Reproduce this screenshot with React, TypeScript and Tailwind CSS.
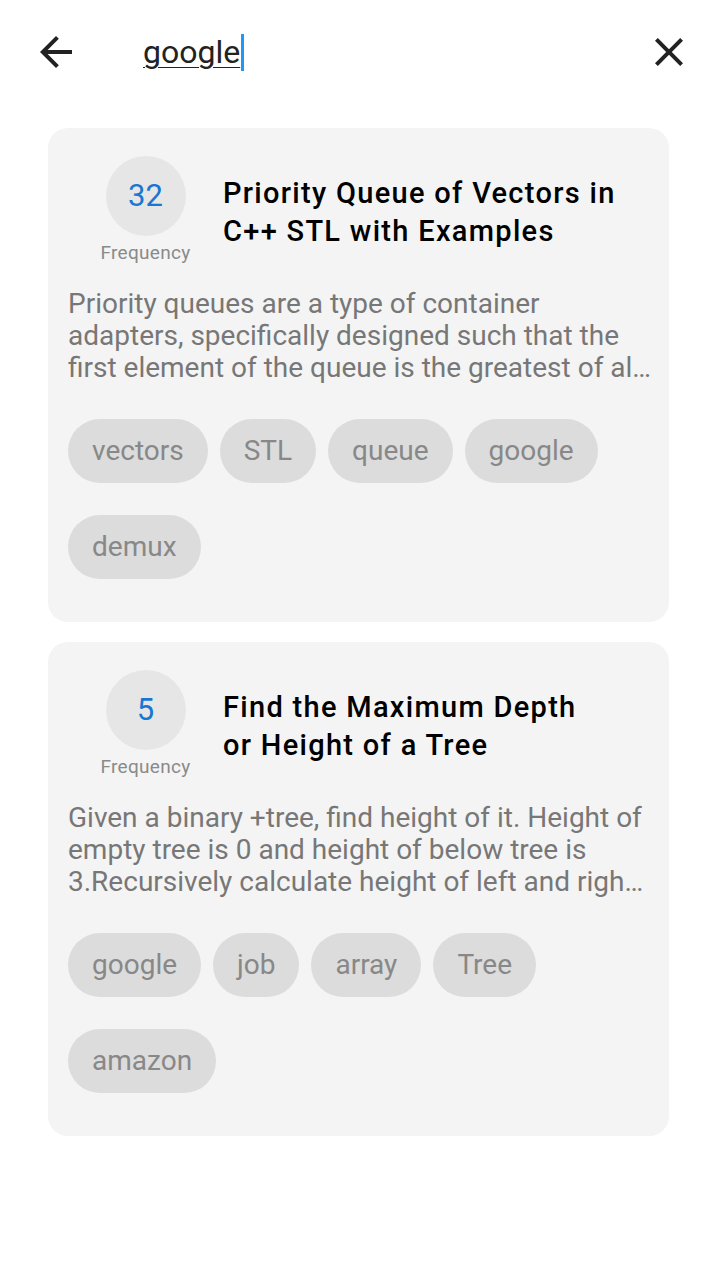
import React from "react";

type Item = {
  count: number;
  title: string[];
  desc: string[];
  tags: string[];
};

const items: Item[] = [
  {
    count: 32,
    title: ["Priority Queue of Vectors in", "C++ STL with Examples"],
    desc: [
      "Priority queues are a type of container",
      "adapters, specifically designed such that the",
      "first element of the queue is the greatest of al…",
    ],
    tags: ["vectors", "STL", "queue", "google", "demux"],
  },
  {
    count: 5,
    title: ["Find the Maximum Depth", "or Height of a Tree"],
    desc: [
      "Given a binary +tree, find height of it. Height of",
      "empty tree is 0 and height of below tree is",
      "3.Recursively calculate height of left and righ…",
    ],
    tags: ["google", "job", "array", "Tree", "amazon"],
  },
];

const ResultCard = ({ item }: { item: Item }) => (
  <div className="rounded-[20px] bg-[#f4f4f4] pl-[20px] pr-[20px] pt-[28px] pb-[11px]">
    {/* top row: frequency + title */}
    <div className="flex items-start">
      <div className="flex w-[155px] shrink-0 flex-col items-center">
        <div className="flex h-[80px] w-[80px] items-center justify-center rounded-full bg-[#e6e6e6] text-[31px] text-[#1976d2]">
          {item.count}
        </div>
        <div className="mt-[6px] text-[19px] leading-[22px] tracking-[0.3px] text-[#8a8a8a]">
          Frequency
        </div>
      </div>
      <div className="mt-[18px] text-[29px] font-medium leading-[38px] tracking-[1.3px] text-black">
        {item.title.map((t) => (
          <div key={t} className="whitespace-nowrap">
            {t}
          </div>
        ))}
      </div>
    </div>

    {/* description, already cut to three lines */}
    <div className="mt-[24px] text-[28px] leading-[32px] text-[#777777]">
      {item.desc.map((d) => (
        <div key={d} className="whitespace-nowrap">
          {d}
        </div>
      ))}
    </div>

    {/* tags */}
    <div className="mt-[35px] flex flex-wrap gap-x-[12px]">
      {item.tags.map((tag) => (
        <div
          key={tag}
          className="mb-[32px] flex h-[64px] items-center rounded-full bg-[#dcdcdc] px-[24px] text-[28px] text-[#888888]"
        >
          {tag}
        </div>
      ))}
    </div>
  </div>
);

export default function App() {
  return (
    <div
      className="min-h-[1280px] w-full bg-white"
      style={{ fontFamily: "Roboto, 'Noto Sans', sans-serif" }}
    >
      {/* search bar */}
      <div className="flex h-[104px] items-center pl-[32px] pr-[24px]">
        <svg viewBox="0 0 24 24" className="h-[48px] w-[48px] fill-[#222]">
          <path d="M20 11H7.83l5.59-5.59L12 4l-8 8 8 8 1.41-1.41L7.83 13H20v-2z" />
        </svg>
        <div className="ml-[63px] flex flex-1 items-center">
          <span className="text-[32px] leading-[36px] text-[#222] underline decoration-[#222] decoration-1 underline-offset-[4px]">
            google
          </span>
          <span className="ml-[1px] h-[37px] w-[3px] bg-[#2196f3]" />
        </div>
        <svg viewBox="0 0 24 24" className="h-[48px] w-[48px] fill-[#222]">
          <path d="M19 6.41L17.59 5 12 10.59 6.41 5 5 6.41 10.59 12 5 17.59 6.41 19 12 13.41 17.59 19 19 17.59 13.41 12z" />
        </svg>
      </div>

      {/* results */}
      <div className="mt-[24px] flex flex-col gap-[20px] px-[48px]">
        {items.map((it) => (
          <ResultCard key={it.title[0]} item={it} />
        ))}
      </div>
    </div>
  );
}
